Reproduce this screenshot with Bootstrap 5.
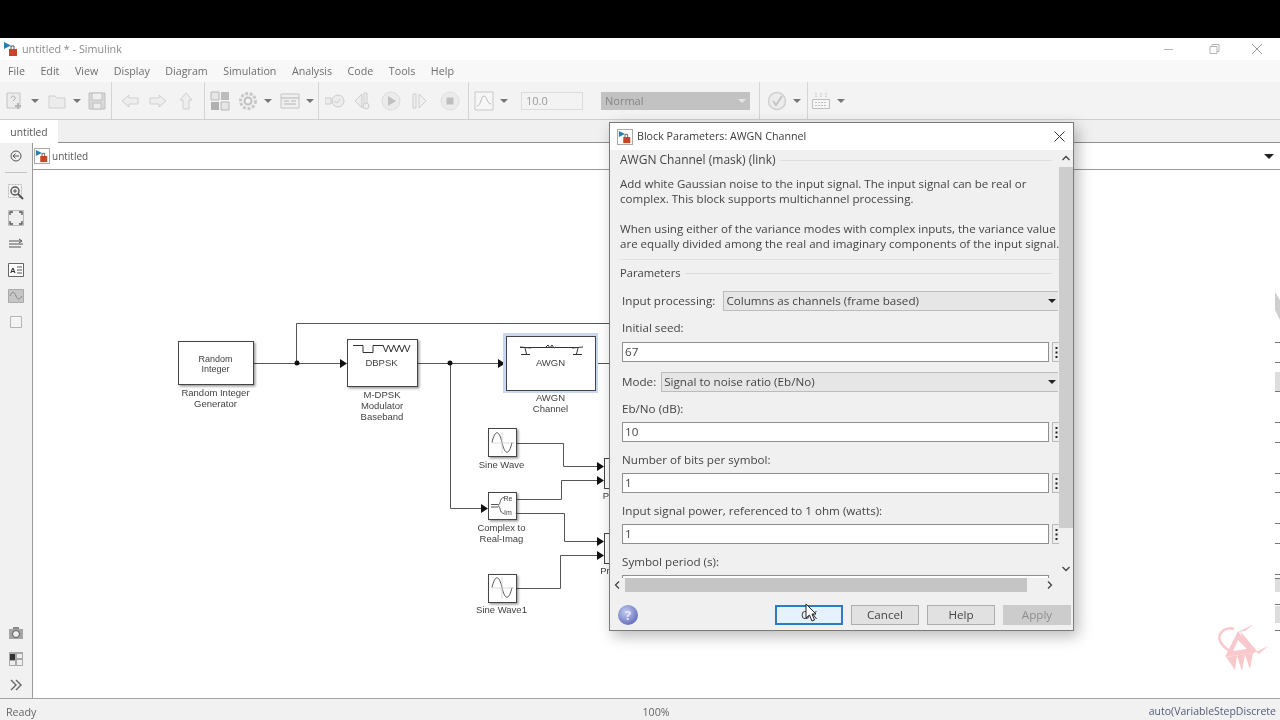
<!DOCTYPE html>
<html lang="en">
<head>
  <meta charset="UTF-8" />
  <title>untitled * - Simulink</title>
  <meta name="viewport" content="width=device-width, initial-scale=1" />
  <link href="https://cdn.jsdelivr.net/npm/bootstrap@5.3.0/dist/css/bootstrap.min.css" rel="stylesheet" />
  <style>
    html, body { height: 720px; }
    body { width: 1280px; overflow: hidden; background: #000; font-family: "Open Sans", "Liberation Sans", sans-serif; font-size: 11px; color: #555; }
    .blackbar { height: 38px; background: #000; }
    .app { height: 682px; background: #f1f1f1; position: relative; filter: blur(.35px); }
    .titlebar { height: 22px; background: #fff; color: #8c8c8c; font-size: 10.8px; padding-left: 3px; }
    .titlebar > span { margin-left: -1px; }
    .winbtns { margin-left: auto; margin-right: 2px; }
    .winbtns svg { display: block; }
    .menubar { height: 22px; background: #f8f8f8; color: #6e6e6e; padding-left: 8px; gap: 15.500px; font-size: 10.7px; }
    .toolbar { height: 38px; background: #f3f3f3; padding-left: 5px; border-bottom: 1px solid #cfcfcf; }
    .tb-group { display: flex; align-items: center; gap: 8px; height: 100%; border-right: 1px solid #d4d4d4; }
    .tb-last { border-right: 0; }
    .tb-caret { width: 0; height: 0; border: 4px solid transparent; border-top: 4px solid #777; border-bottom: 0; margin-left: -2px; }
    .tb-icon { width: 20px; height: 20px; flex: none; display: block; }
    .tb-time { width: 62px; height: 18px; background: #f3f3f3; border: 1px solid #dcdcdc; color: #9a9a9a; padding-left: 4px; line-height: 16px; margin-left: 5px; }
    .tb-mode { width: 149px; height: 18px; background: #c2c2c2; color: #858585; padding-left: 4px; line-height: 18px; margin-left: 10px; position: relative; }
    .tb-mode::after { content: ""; position: absolute; right: 4px; top: 7px; border: 4px solid transparent; border-top-color: #e6e6e6; border-bottom: 0; }
    .tabrow { height: 23px; background: #f0f0f0; border-bottom: 1px solid #8f8f8f; }
    .tabitem { width: 58px; background: #fff; color: #555; font-size: 10.3px; text-align: center; line-height: 24px; height: 23px; }
    .mainrow { height: 555px; }
    .sidebar { width: 33px; flex: none; border-right: 1px solid #9a9a9a; padding-top: 5px; }
    .side-btn { width: 16px; height: 16px; margin: 0 auto 10px; display: block; }
    .side-btn.side-back { margin-bottom: 8px; }
    .side-rule { width: 22px; height: 1px; background: #c4c4c4; margin: 0 auto 11px; }
    .crumbs { height: 27px; background: #fff; border-bottom: 1px solid #9b9b9b; color: #555; font-size: 10px; padding-left: 1px; }
    .crumb-icon { width: 16px; height: 16px; border: 1px solid #a9a9a9; margin-right: 2px; }
    .crumb-caret { margin-left: auto; margin-right: 6px; border: 5px solid transparent; border-top-color: #222; border-bottom: 0; }
    .canvas-svg { display: block; background: #fff; }
    .canvas-svg text { font-family: "Liberation Sans", Arial, sans-serif; fill: #3f3f3f; text-anchor: middle; }
    .statusline { height: 22px; background: #f1f1f1; border-top: 1px solid #a4a4a4; padding: 5px 4px 0 6px; color: #666; font-size: 10.7px; }
    .status-zoom { margin-left: 606px; }
    .status-solver { margin-left: auto; color: #555a78; font-size: 10.500px; }

    .paramdlg { position: absolute; left: 609px; top: 84px; width: 465px; height: 509px; background: #f0f0f0; border: 1px solid #7a7a7a; box-shadow: 4px 5px 14px rgba(0,0,0,.28); color: #444; font-size: 11.650px; }
    .dlg-title { height: 27px; background: #fff; padding-left: 7px; color: #3c3c3c; font-size: 10.700px; }
    .dlg-title .crumb-icon { margin-right: 4px; }
    .dlg-close { margin-left: auto; margin-right: 8px; }
    .dlg-mid { height: 428px; }
    .dlg-pane { width: 449px; overflow: hidden; padding: 1px 0 0 10px; }
    .dlg-inner { width: 452px; }
    .legend-line { height: 18px; }
    .legend-line::after { content: ""; flex: 1; height: 1px; background: #dcdcdc; margin-left: 4px; margin-right: 20px; }
    .legend-main { font-size: 12px; }
    .desc-text { margin: 0; padding-top: 7px; height: 91px; line-height: 15px; border-bottom: 1px solid #e2e2e2; white-space: nowrap; font-size: 11.550px; }
    .param-head { margin-top: 4px; font-size: 11.200px; }
    .field-lbl { padding-left: 2px; height: 20px; line-height: 20px; margin-top: 7px; margin-bottom: 4px; }
    .field-lbl.is-tight { margin-top: 8px; margin-bottom: 3px; }
    .field-lbl.is-after-pick { margin-bottom: 3px; }
    .field-row { padding-left: 2px; height: 20px; }
    .pick-row { width: 438px; margin-top: 10px; }
    .pick-first { margin-top: 9px; }
    .wire-input { height: 20px; min-height: 0; width: 427px; flex: none; border: 1px solid #8e8e8e; border-radius: 0; padding: 0 2px 1px; font-size: 11.650px; color: #444; background: #fff; box-shadow: none; }
    .dots-btn { width: 7px; height: 20px; margin-left: 3px; flex: none; background: #eee; border: 1px solid #b9b9b9; border-right: 0; display: flex; align-items: center; justify-content: center; }
    .pick-lbl { margin-right: 8px; white-space: nowrap; }
    .pick-lbl.is-short { margin-right: 5px; }
    .pick-select { height: 20px; min-height: 0; flex: 1; padding: 0 0 0 2px; font-size: 11.650px; color: #444; border: 1px solid #bcbcbc; border-right: 0; border-radius: 0; background-color: #e6e6e6; background-image: url("data:image/svg+xml,%3Csvg xmlns='http://www.w3.org/2000/svg' width='8' height='4'%3E%3Cpath d='M0 0h8L4 4z' fill='%23222'/%3E%3C/svg%3E"); background-size: 8px 4px; background-position: right 2px center; box-shadow: none; }
    .vscroll { width: 14px; flex: none; background: #f0f0f0; }
    .vs-arrow { height: 15px; }
    .vs-thumb { height: 361px; background: #cdcdcd; margin-top: 2px; }
    .vs-bottom { margin-top: 34px; }
    .hscroll { height: 14px; padding-left: 2px; background: #f0f0f0; }
    .hs-thumb { width: 402px; height: 14px; background: #c5c5c5; margin: 0 18px 0 3px; }
    .dlg-foot { padding: 13px 2px 0 8px; }
    .dlg-btn { width: 68px; height: 20px; padding: 0; border-radius: 0; font-size: 11.650px; line-height: 18px; background: #e1e1e1; border: 1px solid #adadad; color: #444; margin-left: 8px; }
    .dlg-btn.is-default { background: #e5f1fb; border: 2px solid #2b7cc4; line-height: 16px; }
    .dlg-btn.is-off { background: #cccccc; border-color: #cccccc; color: #8d8d8d; }
    .help-orb { width: 20px; height: 20px; border-radius: 50%; background: radial-gradient(circle at 40% 35%, #c4cdf0, #6670bd 75%); color: #e8e8ff; text-align: center; line-height: 20px; font-weight: 700; font-size: 13px; margin-right: auto; }
    .mouse-arrow { position: absolute; left: 195px; top: 480px; }
  </style>
</head>
<body class="d-flex flex-column">

<svg width="0" height="0" class="position-absolute">
  <symbol id="slk" viewBox="0 0 16 16">
    <path d="M1 1l7 3.500L1 8z" fill="#2a7fb0"/><path d="M6 8h8v7H6z" fill="#c5442c"/><path d="M8 8V5h3v3" fill="none" stroke="#555"/>
  </symbol>
  <symbol id="vdots" viewBox="0 0 3 11">
    <path d="M.5 0h2v2h-2zM.5 4.500h2v2h-2zM.5 9h2v2h-2z" fill="#222"/>
  </symbol>
</svg>

<div class="blackbar"></div>

<div class="app">
  <div class="titlebar d-flex align-items-center">
    <svg width="16" height="16" class="me-1"><use href="#slk"/></svg>
    <span>untitled * - Simulink</span>
    <div class="winbtns d-flex align-items-center">
      <svg width="43" height="12"><path d="M0 6.500h9" stroke="#b3b3b3"/></svg>
      <svg width="44" height="12"><path d="M3 3.500h7v7H3zM5 3.500v-2h7v7h-2" fill="none" stroke="#b3b3b3"/></svg>
      <svg width="27" height="12"><path d="M1 1l10 10M11 1L1 11" stroke="#9a9a9a"/></svg>
    </div>
  </div>

  <div class="menubar d-flex align-items-center">
    <span>File</span><span>Edit</span><span>View</span><span>Display</span><span>Diagram</span><span>Simulation</span><span>Analysis</span><span>Code</span><span>Tools</span><span>Help</span>
  </div>

  <div class="toolbar d-flex align-items-center">
    <div class="tb-group" style="padding-right:4px">
      <svg class="tb-icon" viewBox="0 0 20 20" fill="none" stroke="#c4c4c4"><path d="M2 2h13v15H2z" fill="#ececec"/><path d="M6 7c1-3 5-2 4 1l-2 2" stroke="#aaa"/><path d="M13 12v6M10 15h6" stroke="#b4b4b4" stroke-width="2"/></svg>
      <i class="tb-caret"></i>
      <svg class="tb-icon" viewBox="0 0 20 20" fill="#ececec" stroke="#cfcfcf"><path d="M2 5h6l2 2h8v10H2z"/></svg>
      <i class="tb-caret"></i>
      <svg class="tb-icon" style="margin-left:-2px" viewBox="0 0 20 20" fill="#d8d8d8" stroke="#c0c0c0"><path d="M2 2h16v16H2z"/><path d="M5 2h10v7H5z" fill="#efefef"/><path d="M6 12h8v6H6z" fill="#ededed"/></svg>
    </div>
    <div class="tb-group" style="padding:0 8px 0 8px">
      <svg class="tb-icon" viewBox="0 0 20 20" fill="#eeeeee" stroke="#cfcfcf"><path d="M2 10l7-6v3h9v6H9v3z"/></svg>
      <svg class="tb-icon" viewBox="0 0 20 20" fill="#eeeeee" stroke="#cfcfcf"><path d="M18 10l-7-6v3H2v6h9v3z"/></svg>
      <svg class="tb-icon" viewBox="0 0 20 20" fill="#eeeeee" stroke="#cfcfcf"><path d="M10 2l6 7h-3v9H7V9H4z"/></svg>
    </div>
    <div class="tb-group" style="padding:0 4px 0 5px">
      <svg class="tb-icon" viewBox="0 0 20 20"><path d="M1 1h8v8H1z" fill="#e6e6e6" stroke="#b8b8b8"/><path d="M11 1h8v8h-8z" fill="#bcbcbc"/><path d="M1 11h8v8H1z" fill="#b0b0b0"/><path d="M11 11h8v8h-8z" fill="#e6e6e6" stroke="#b8b8b8"/></svg>
      <svg class="tb-icon" viewBox="0 0 20 20" fill="none"><circle cx="10" cy="10" r="7.500" stroke="#c8c8c8" stroke-width="3" stroke-dasharray="3 1.600"/><circle cx="10" cy="10" r="3.500" stroke="#c0c0c0" stroke-width="2"/></svg>
      <i class="tb-caret"></i>
      <svg class="tb-icon" viewBox="0 0 20 20" fill="#f0f0f0" stroke="#c4c4c4"><path d="M1 3h18v14H1z"/><path d="M1 7h18M4 10h5M11 10h5M4 13h12" stroke="#b4b4b4"/></svg>
      <i class="tb-caret"></i>
    </div>
    <div class="tb-group" style="padding:0 8px 0 6px">
      <svg class="tb-icon" viewBox="0 0 20 20" fill="#ececec" stroke="#cdcdcd"><path d="M0 7h6v6H0z"/><circle cx="13" cy="10" r="6"/><path d="M9 10l3 2 3-4" fill="none"/></svg>
      <svg class="tb-icon" viewBox="0 0 20 20" fill="#ececec" stroke="#cdcdcd"><path d="M9 3L2 10l7 7z"/><path d="M11 2h3v11h-3z"/><circle cx="13" cy="15" r="3"/></svg>
      <svg class="tb-icon" viewBox="0 0 20 20"><circle cx="10" cy="10" r="9" fill="#ebebeb" stroke="#dcdcdc"/><path d="M7 5l8 5-8 5z" fill="#c0c0c0"/></svg>
      <svg class="tb-icon" viewBox="0 0 20 20" fill="#f0f0f0" stroke="#cdcdcd"><path d="M4 3h3v14H4zM10 3l7 7-7 7z"/></svg>
      <svg class="tb-icon" style="margin-left:3px" viewBox="0 0 20 20"><circle cx="10" cy="10" r="9" fill="#ebebeb" stroke="#dedede"/><path d="M6.500 6.500h7v7h-7z" fill="#bebebe"/></svg>
    </div>
    <div class="tb-group" style="padding:0 9px 0 5px">
      <svg class="tb-icon" viewBox="0 0 20 20" fill="#f6f6f6" stroke="#c8c8c8"><path d="M1 1h18v18H1z"/><path d="M3 15c4 0 4-10 7-10s3 8 7 8" fill="none" stroke="#bbb"/></svg>
      <i class="tb-caret"></i>
      <div class="tb-time">10.0</div>
      <div class="tb-mode">Normal</div>
    </div>
    <div class="tb-group" style="padding:0 6px 0 7px">
      <svg class="tb-icon" viewBox="0 0 20 20" fill="none"><circle cx="10" cy="10" r="8.500" fill="#ececec" stroke="#cfcfcf" stroke-width="1.500"/><path d="M6 10l3 4 6-9" stroke="#c2c2c2" stroke-width="1.800"/></svg>
      <i class="tb-caret"></i>
    </div>
    <div class="tb-group tb-last" style="padding-left:3px">
      <svg class="tb-icon" viewBox="0 0 20 20" fill="none" stroke="#bdbdbd"><path d="M1.500 8.500h17v9h-17z" fill="#f6f6f6"/><path d="M4 11.500h12M4 14.500h12" stroke-dasharray="2 1"/><path d="M5 2v4M10 2v4M15 2v4" stroke-dasharray="1.500 1"/></svg>
      <i class="tb-caret"></i>
    </div>
  </div>

  <div class="tabrow d-flex"><div class="tabitem">untitled</div></div>

  <div class="mainrow d-flex">
    <div class="sidebar d-flex flex-column">
      <svg class="side-btn side-back" viewBox="0 0 16 16" fill="none" stroke="#555"><circle cx="8" cy="8" r="5"/><path d="M11 8H5M7.500 5.500L5 8l2.500 2.500"/></svg>
      <div class="side-rule"></div>
      <svg class="side-btn" viewBox="0 0 16 16" fill="none"><path d="M.5.500h13v13H.5z" stroke="#bbb" stroke-dasharray="2 1"/><circle cx="7" cy="7" r="4" stroke="#555" stroke-width="1.400"/><path d="M10 10l5 5" stroke="#555" stroke-width="2"/><path d="M5 7h4M7 5v4" stroke="#555"/></svg>
      <svg class="side-btn" viewBox="0 0 16 16"><path d="M.5.500h15v15H.5z" fill="#eee" stroke="#bbb"/><path d="M2 5V2h3M11 2h3v3M14 11v3h-3M5 14H2v-3" fill="none" stroke="#555" stroke-width="1.300"/></svg>
      <svg class="side-btn" viewBox="0 0 16 16" fill="none" stroke="#555"><path d="M1 5h12M1 8h14M1 11h12M11 3l3 2-3 2"/></svg>
      <svg class="side-btn" viewBox="0 0 16 16"><path d="M.5 1.500h15v13H.5z" fill="#fff" stroke="#666"/><text x="2" y="11" font-size="8" font-weight="700" fill="#333" font-family="Liberation Sans, sans-serif">A</text><path d="M9 5h5M9 8h5M9 11h5" stroke="#555"/></svg>
      <svg class="side-btn" viewBox="0 0 16 16"><path d="M.5 1.500h15v13H.5z" fill="#c6c6c6" stroke="#aaa"/><path d="M2 8c2-5 4-5 6 0s4 3 6 0" fill="none" stroke="#888"/></svg>
      <svg class="side-btn" viewBox="0 0 16 16"><path d="M2.500 2.500h11v11h-11z" fill="#f4f4f4" stroke="#b5b5b5"/></svg>
      <div class="mt-auto">
        <svg class="side-btn" viewBox="0 0 16 16"><path d="M1 4h14v10H1z" fill="#a4a4a4"/><path d="M5 2h6v2H5z" fill="#888"/><circle cx="8" cy="9" r="3.500" fill="#eee" stroke="#555"/></svg>
        <svg class="side-btn" viewBox="0 0 16 16"><path d="M1 1h14v14H1z" fill="#a9a9a9"/><path d="M2 3h5v6H2z" fill="#333"/><path d="M9 3h5v4H9zM2 10h5v4H2zM9 9h5v5H9z" fill="#eee"/></svg>
        <svg class="side-btn" viewBox="0 0 16 16" fill="none" stroke="#666" stroke-width="1.400" style="margin-bottom:5px"><path d="M3 3l5 5-5 5M8 3l5 5-5 5"/></svg>
      </div>
    </div>

    <div class="flex-grow-1 d-flex flex-column">
      <div class="crumbs d-flex align-items-center">
        <span class="crumb-icon d-flex"><svg width="14" height="14"><use href="#slk"/></svg></span>
        <span>untitled</span>
        <i class="crumb-caret"></i>
      </div>
      <svg class="canvas-svg" width="1247" height="528" viewBox="33 170 1247 528">
        <defs>
          <filter id="blkshadow" x="-10%" y="-10%" width="125%" height="125%"><feDropShadow dx="1.500" dy="1.500" stdDeviation="1" flood-color="#000" flood-opacity=".4"/></filter>
        </defs>

        <!-- wires -->
        <g fill="none" stroke="#555" stroke-width="1">
          <path d="M254 363.500H340M296.500 363V323.500H612M418 363.500H498M450.500 363V508.500H481M596 363.500H612"/>
          <path d="M517 443.500H563.500V466.500H597M517 499.500H561.500V480.500H597M517 513.500H564.500V541.500H597M517 588.500H560.500V555.500H597"/>
        </g>
        <g fill="#111">
          <circle cx="297" cy="363" r="2.500"/><circle cx="450" cy="363" r="2.500"/>
          <path d="M340 359l7 4.500-7 4.500zM498 359l7 4.500-7 4.500zM481 504l7 4.500-7 4.500z"/>
          <path d="M597 462l7 4.500-7 4.500zM597 476l7 4.500-7 4.500zM597 537l7 4.500-7 4.500zM597 551l7 4.500-7 4.500z"/>
        </g>

        <!-- blocks -->
        <rect x="503" y="333" width="95" height="60" fill="#c9d8f0"/>
        <g fill="#fff" stroke="#444">
          <rect x="178.500" y="341.500" width="75" height="43" filter="url(#blkshadow)"/>
          <rect x="347.500" y="339.500" width="70" height="47" filter="url(#blkshadow)"/>
          <rect x="506.500" y="336.500" width="89" height="54"/>
          <rect x="488.500" y="428.500" width="28" height="28" filter="url(#blkshadow)"/>
          <rect x="488.500" y="492.500" width="28" height="27" filter="url(#blkshadow)"/>
          <rect x="488.500" y="574.500" width="28" height="28" filter="url(#blkshadow)"/>
          <rect x="604.500" y="458.500" width="12" height="30"/>
          <rect x="604.500" y="533.500" width="12" height="30"/>
        </g>

        <!-- block glyphs -->
        <g fill="none" stroke="#333">
          <path d="M353 345.500h10v7h10v-7h10"/>
          <path d="M383 345l2.700 7 2.700-7 2.700 7 2.700-7 2.700 7 2.700-7 2.700 7 2.700-7 2.700 7 2.700-7"/>
          <path d="M520 347.500h57M520 347l11 1M583 347l-11 1M525 348l1.500 6M578 348l-1.500 6M521 354.500h9M573 354.500h9"/>
          <path d="M546 347l2-2 2 3 2-3 2 3 2-1" fill="#fff"/>
          <path d="M492 442.500c3-13 7-13 10 0s7 13 10 0" stroke="#555"/>
          <path d="M492 443h22M502 432v22" stroke="#ccc" stroke-width=".7"/>
          <path d="M492 587.500c3-13 7-13 10 0s7 13 10 0" stroke="#555"/>
          <path d="M492 588h22M502 577v22" stroke="#ccc" stroke-width=".7"/>
          <path d="M491 504.500h7M491 507h7M498 505c3 0 1-7 6-7.500M498 506c3 0 1 7 6 7.500" stroke="#555"/>
        </g>

        <!-- labels -->
        <g font-size="9">
          <text x="215.500" y="362">Random</text><text x="215.500" y="372">Integer</text>
          <text x="381.500" y="366" font-size="9.500">DBPSK</text>
          <text x="550.500" y="366" font-size="9.500">AWGN</text>
          <text x="508" y="501" font-size="7">Re</text><text x="508" y="515" font-size="7">Im</text>
        </g>
        <g font-size="9.500">
          <text x="215.500" y="396">Random Integer</text><text x="215.500" y="407">Generator</text>
          <text x="382" y="398">M-DPSK</text><text x="382" y="409">Modulator</text><text x="382" y="420">Baseband</text>
          <text x="550.500" y="401">AWGN</text><text x="550.500" y="412">Channel</text>
          <text x="501.500" y="468">Sine Wave</text>
          <text x="501.500" y="531">Complex to</text><text x="501.500" y="542">Real-Imag</text>
          <text x="501.500" y="613">Sine Wave1</text>
          <text x="606" y="499">P</text><text x="605" y="574">Pr</text>
        </g>

        <!-- block clipped at the right edge -->
        <path d="M1275 342.500h5M1275 362.500h5M1275 391.500h5M1275 422.500h5M1275 442.500h5M1275 473.500h5M1275 492.500h5M1275 523.500h5M1275 543.500h5M1275 574.500h5M1275 578.500h5M1275 604.500h5M1275 630.500h5" stroke="#777"/>
        <path d="M1275 372h5v19h-5zM1275 579h5v13h-5zM1275 606h5v17h-5z" fill="#ddd"/>
        <path d="M1275 292l5 8v20l-5-10z" fill="#cfcfcf"/>

        <!-- watermark -->
        <g fill="#f9c8cc">
          <path d="M1238 631L1225 657L1253 653ZM1238 640L1233 651L1247 649Z" fill-rule="evenodd"/>
          <path d="M1240 631L1257 651L1252 654L1243 640ZM1256 652L1268 646L1259 654ZM1238 632L1254 624L1245 631Z"/>
          <path d="M1226 657L1235 670L1237 656L1242 671L1245 655L1250 669L1253 653Z"/>
          <path d="M1234 629C1226 626 1217 633 1220 641C1222 646 1228 650 1231 652" fill="none" stroke="#f9c8cc" stroke-width="2.500"/>
        </g>
      </svg>
    </div>
  </div>

  <div class="statusline d-flex align-items-center">
    <span>Ready</span>
    <span class="status-zoom">100%</span>
    <span class="status-solver">auto(VariableStepDiscrete</span>
  </div>

  <!-- Block Parameters dialog -->
  <div class="paramdlg d-flex flex-column">
    <div class="dlg-title d-flex align-items-center">
      <span class="crumb-icon d-flex"><svg width="14" height="14"><use href="#slk"/></svg></span>
      <span>Block Parameters: AWGN Channel</span>
      <svg class="dlg-close" width="11" height="11"><path d="M.5.500l10 10M10.500.500l-10 10" stroke="#333"/></svg>
    </div>
    <div class="dlg-mid d-flex">
      <div class="dlg-pane">
        <div class="dlg-inner">
          <div class="legend-line legend-main d-flex align-items-center">AWGN Channel (mask) (link)</div>
          <p class="desc-text">Add white Gaussian noise to the input signal. The input signal can be real or<br>complex. This block supports multichannel processing.<br><br>When using either of the variance modes with complex inputs, the variance value<br>are equally divided among the real and imaginary components of the input signal.</p>
          <div class="param-head legend-line d-flex align-items-center">Parameters</div>
          <div class="field-row pick-row pick-first d-flex align-items-center">
            <span class="pick-lbl">Input processing:</span>
            <select class="form-select pick-select"><option>Columns as channels (frame based)</option></select>
          </div>
          <div class="field-lbl">Initial seed:</div>
          <div class="field-row d-flex"><input class="form-control wire-input" value="67" /><div class="dots-btn"><svg width="3" height="11"><use href="#vdots"/></svg></div></div>
          <div class="field-row pick-row d-flex align-items-center">
            <span class="pick-lbl is-short">Mode:</span>
            <select class="form-select pick-select"><option>Signal to noise ratio  (Eb/No)</option></select>
          </div>
          <div class="field-lbl is-after-pick">Eb/No (dB):</div>
          <div class="field-row d-flex"><input class="form-control wire-input" value="10" /><div class="dots-btn"><svg width="3" height="11"><use href="#vdots"/></svg></div></div>
          <div class="field-lbl is-tight">Number of bits per symbol:</div>
          <div class="field-row d-flex"><input class="form-control wire-input" value="1" /><div class="dots-btn"><svg width="3" height="11"><use href="#vdots"/></svg></div></div>
          <div class="field-lbl is-tight">Input signal power, referenced to 1 ohm (watts):</div>
          <div class="field-row d-flex"><input class="form-control wire-input" value="1" /><div class="dots-btn"><svg width="3" height="11"><use href="#vdots"/></svg></div></div>
          <div class="field-lbl is-tight">Symbol period (s):</div>
          <div class="field-row d-flex"><input class="form-control wire-input" /></div>
        </div>
      </div>
      <div class="vscroll">
        <svg class="vs-arrow d-block" width="14" viewBox="0 0 14 15"><path d="M3.500 10L7 6.500l3.500 3.500" fill="none" stroke="#444" stroke-width="1.300"/></svg>
        <div class="vs-thumb"></div>
        <svg class="vs-arrow vs-bottom d-block" width="14" viewBox="0 0 14 15"><path d="M3.500 5L7 8.500 10.500 5" fill="none" stroke="#444" stroke-width="1.300"/></svg>
      </div>
    </div>
    <div class="hscroll d-flex align-items-center">
      <svg width="10" height="14"><path d="M7 3.500L3.500 7 7 10.500" fill="none" stroke="#444" stroke-width="1.300"/></svg>
      <div class="hs-thumb"></div>
      <svg width="10" height="14"><path d="M3 3.500L6.500 7 3 10.500" fill="none" stroke="#444" stroke-width="1.300"/></svg>
    </div>
    <div class="dlg-foot d-flex align-items-start">
      <div class="help-orb">?</div>
      <button class="btn dlg-btn is-default" type="button">OK</button>
      <button class="btn dlg-btn" type="button">Cancel</button>
      <button class="btn dlg-btn" type="button">Help</button>
      <button class="btn dlg-btn is-off" type="button">Apply</button>
    </div>
    <svg class="mouse-arrow" width="14" height="20" viewBox="0 0 14 20"><path d="M1 1v14l3.500-3 2.500 6 2.500-1-2.500-6H11z" fill="#fff" stroke="#222"/></svg>
  </div>
</div>

<script src="https://cdn.jsdelivr.net/npm/bootstrap@5.3.0/dist/js/bootstrap.bundle.min.js"></script>
</body>
</html>
